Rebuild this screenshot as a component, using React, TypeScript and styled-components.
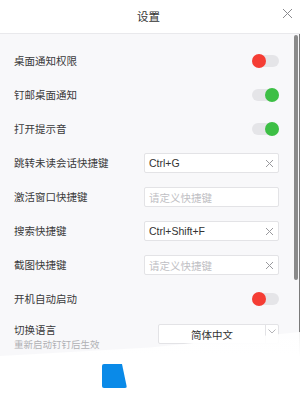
import React from 'react';
import styled, { createGlobalStyle } from 'styled-components';

const GlobalStyle = createGlobalStyle`
  html, body {
    margin: 0;
    padding: 0;
    background: #ffffff;
  }
  body {
    font-family: "Noto Sans CJK SC", "Noto Sans", sans-serif;
    color: #333333;
  }
`;

const Window = styled.div`
  position: relative;
  width: 300px;
  height: 394px;
  overflow: hidden;
  background: #ffffff;
  display: flex;
  flex-direction: column;
`;

const Header = styled.div`
  position: relative;
  height: 34px;
  flex-shrink: 0;
  display: flex;
  align-items: center;
  justify-content: center;
  border-bottom: 1px solid #e9e9ec;
  box-sizing: border-box;
`;

const Title = styled.div`
  font-size: 11.5px;
  color: #333333;
  margin-left: -3px;
  margin-top: -1px;
`;

const CloseButton = styled.div`
  position: absolute;
  right: 7px;
  top: 8px;
  width: 11px;
  height: 11px;
  display: flex;
`;

const Body = styled.div`
  position: relative;
  height: 323px;
  flex-shrink: 0;
  background: #f8f8fa;
  display: flex;
`;

const Content = styled.div`
  flex: 1;
  padding: 10px 15px 0 14px;
  display: flex;
  flex-direction: column;
`;

const Row = styled.div<{ $tall?: boolean }>`
  height: 34px;
  display: flex;
  align-items: center;
  justify-content: space-between;
  padding-top: ${({ $tall }) => ($tall ? '4px' : '0')};
`;

const LabelBlock = styled.div`
  display: flex;
  flex-direction: column;
  gap: 1px;
`;

const Label = styled.div`
  font-size: 10.5px;
  color: #3a3a3a;
  line-height: 14px;
`;

const SubLabel = styled.div`
  font-size: 9.5px;
  color: #b0b0b4;
  line-height: 13px;
`;

const Track = styled.div<{ $on: boolean }>`
  position: relative;
  width: 27px;
  height: 12px;
  border-radius: 6px;
  background: #e5e5e8;
  display: flex;
  align-items: center;
  justify-content: ${({ $on }) => ($on ? 'flex-end' : 'flex-start')};
`;

const Knob = styled.div<{ $on: boolean }>`
  width: 14px;
  height: 14px;
  border-radius: 50%;
  background: ${({ $on }) => ($on ? '#3dbf45' : '#f53d34')};
`;

const Input = styled.div`
  width: 135px;
  height: 20px;
  box-sizing: border-box;
  border: 1px solid #e3e3e6;
  border-radius: 2px;
  background: #ffffff;
  display: flex;
  align-items: center;
  justify-content: space-between;
  padding: 0 4px 0 4px;
`;

const InputText = styled.span<{ $placeholder?: boolean }>`
  font-size: 10.5px;
  color: ${({ $placeholder }) => ($placeholder ? '#c0c0c4' : '#333333')};
  font-family: ${({ $placeholder }) =>
    $placeholder ? '"Noto Sans CJK SC", sans-serif' : '"Liberation Sans", "Noto Sans CJK SC", sans-serif'};
`;

const Select = styled.div`
  width: 121px;
  height: 20px;
  box-sizing: border-box;
  border: 1px solid #e3e3e6;
  border-radius: 2px;
  background: #ffffff;
  display: flex;
  align-items: stretch;
  margin-top: -6px;
`;

const SelectValue = styled.div`
  flex: 1;
  display: flex;
  align-items: center;
  justify-content: center;
  font-size: 10.5px;
  color: #333333;
`;

const SelectArrow = styled.div`
  width: 12px;
  border-left: 1px solid #e3e3e6;
  display: flex;
  align-items: flex-start;
  justify-content: center;
  padding-top: 4px;
`;

const ScrollBar = styled.div`
  width: 6px;
  flex-shrink: 0;
  display: flex;
  justify-content: flex-start;
  border-right: 1px solid #7a7a7a;
  box-sizing: border-box;
`;

const Thumb = styled.div`
  width: 4px;
  height: 245px;
  margin-top: 1px;
  border-radius: 2px;
  background: #8a8a8a;
`;

const Footer = styled.div`
  flex: 1;
  display: flex;
  padding: 7px 0 0 102px;
`;

const PrimaryButton = styled.div`
  position: relative;
  z-index: 2;
  width: 25px;
  height: 24px;
  border-radius: 2px;
  background: #0a8ae8;
  clip-path: polygon(0 0, 80% 0, 100% 100%, 0 100%);
`;

const Fade = styled.div`
  position: absolute;
  z-index: 1;
  left: 0;
  bottom: 0;
  width: 300px;
  height: 62px;
  background: linear-gradient(180deg, rgba(255, 255, 255, 0.9), #ffffff 40%);
  clip-path: polygon(0 38.7%, 50% 25%, 100% 0, 100% 100%, 0 100%);
  pointer-events: none;
`;

const ClearIcon = () => (
  <svg width="9" height="9" viewBox="0 0 9 9">
    <path d="M1 1L8 8M8 1L1 8" stroke="#9a9a9e" strokeWidth="1" fill="none" />
  </svg>
);

const Toggle: React.FC<{ on: boolean }> = ({ on }) => (
  <Track $on={on}>
    <Knob $on={on} />
  </Track>
);

const ShortcutInput: React.FC<{ value?: string; clearable?: boolean }> = ({ value, clearable }) => (
  <Input>
    {value ? <InputText>{value}</InputText> : <InputText $placeholder>请定义快捷键</InputText>}
    {clearable ? <ClearIcon /> : null}
  </Input>
);

const App: React.FC = () => {
  return (
    <>
      <GlobalStyle />
      <Window>
        <Header>
          <Title>设置</Title>
          <CloseButton>
            <svg width="11" height="11" viewBox="0 0 11 11">
              <path d="M1 1L10 10M10 1L1 10" stroke="#8a8a8e" strokeWidth="1" fill="none" />
            </svg>
          </CloseButton>
        </Header>
        <Body>
          <Content>
            <Row>
              <Label>桌面通知权限</Label>
              <Toggle on={false} />
            </Row>
            <Row>
              <Label>钉邮桌面通知</Label>
              <Toggle on />
            </Row>
            <Row>
              <Label>打开提示音</Label>
              <Toggle on />
            </Row>
            <Row>
              <Label>跳转未读会话快捷键</Label>
              <ShortcutInput value="Ctrl+G" clearable />
            </Row>
            <Row>
              <Label>激活窗口快捷键</Label>
              <ShortcutInput />
            </Row>
            <Row>
              <Label>搜索快捷键</Label>
              <ShortcutInput value="Ctrl+Shift+F" clearable />
            </Row>
            <Row>
              <Label>截图快捷键</Label>
              <ShortcutInput clearable />
            </Row>
            <Row>
              <Label>开机自动启动</Label>
              <Toggle on={false} />
            </Row>
            <Row $tall>
              <LabelBlock>
                <Label>切换语言</Label>
                <SubLabel>重新启动钉钉后生效</SubLabel>
              </LabelBlock>
              <Select>
                <SelectValue>简体中文</SelectValue>
                <SelectArrow>
                  <svg width="8" height="5" viewBox="0 0 8 5">
                    <path d="M0.5 0.5L4 4L7.5 0.5" stroke="#b5b5b9" strokeWidth="1" fill="none" />
                  </svg>
                </SelectArrow>
              </Select>
            </Row>
          </Content>
          <ScrollBar>
            <Thumb />
          </ScrollBar>
        </Body>
        <Footer>
          <PrimaryButton />
        </Footer>
        <Fade />
      </Window>
    </>
  );
};

export default App;
